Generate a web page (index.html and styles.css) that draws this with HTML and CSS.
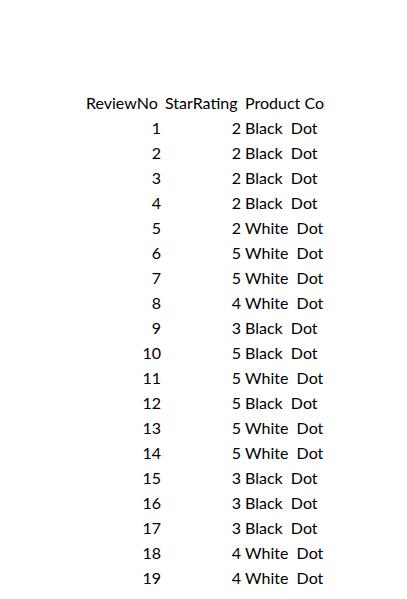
FILE: index.html
```html
<!DOCTYPE html>
<html>
<head>
<meta charset="utf-8">
<link rel="stylesheet" href="styles.css">
</head>
<body>
<div class="sheet">
<table class="grid">
<colgroup><col class="c-a"><col class="c-b"><col class="c-c"></colgroup>
<tr><td class="txt">ReviewNo</td><td class="txt">StarRating</td><td class="txt">Product Color</td></tr>
<tr><td class="num">1</td><td class="num">2</td><td class="txt">Black  Dot</td></tr>
<tr><td class="num">2</td><td class="num">2</td><td class="txt">Black  Dot</td></tr>
<tr><td class="num">3</td><td class="num">2</td><td class="txt">Black  Dot</td></tr>
<tr><td class="num">4</td><td class="num">2</td><td class="txt">Black  Dot</td></tr>
<tr><td class="num">5</td><td class="num">2</td><td class="txt">White  Dot</td></tr>
<tr><td class="num">6</td><td class="num">5</td><td class="txt">White  Dot</td></tr>
<tr><td class="num">7</td><td class="num">5</td><td class="txt">White  Dot</td></tr>
<tr><td class="num">8</td><td class="num">4</td><td class="txt">White  Dot</td></tr>
<tr><td class="num">9</td><td class="num">3</td><td class="txt">Black  Dot</td></tr>
<tr><td class="num">10</td><td class="num">5</td><td class="txt">Black  Dot</td></tr>
<tr><td class="num">11</td><td class="num">5</td><td class="txt">White  Dot</td></tr>
<tr><td class="num">12</td><td class="num">5</td><td class="txt">Black  Dot</td></tr>
<tr><td class="num">13</td><td class="num">5</td><td class="txt">White  Dot</td></tr>
<tr><td class="num">14</td><td class="num">5</td><td class="txt">White  Dot</td></tr>
<tr><td class="num">15</td><td class="num">3</td><td class="txt">Black  Dot</td></tr>
<tr><td class="num">16</td><td class="num">3</td><td class="txt">Black  Dot</td></tr>
<tr><td class="num">17</td><td class="num">3</td><td class="txt">Black  Dot</td></tr>
<tr><td class="num">18</td><td class="num">4</td><td class="txt">White  Dot</td></tr>
<tr><td class="num">19</td><td class="num">4</td><td class="txt">White  Dot</td></tr>
</table>
</div>
</body>
</html>
```
FILE: styles.css
```css
html, body {
  margin: 0;
  padding: 0;
  background: #fff;
}
body {
  font-family: Lato, "Open Sans", sans-serif;
  font-size: 16px;
  color: #000;
}
.sheet {
  padding: 89px 0 0 84px;
}
.grid {
  border-collapse: collapse;
  table-layout: fixed;
  width: 241px;
}
.c-a { width: 79px; }
.c-b { width: 80px; }
.c-c { width: 82px; }
.grid tr { height: 25px; }
.grid td {
  box-sizing: border-box;
  height: 25px;
  padding: 0 2px 1px 2px;
  white-space: pre;
  overflow: hidden;
  vertical-align: bottom;
  line-height: 20px;
}
.grid td.num { text-align: right; }
.grid td.txt { text-align: left; }
```
